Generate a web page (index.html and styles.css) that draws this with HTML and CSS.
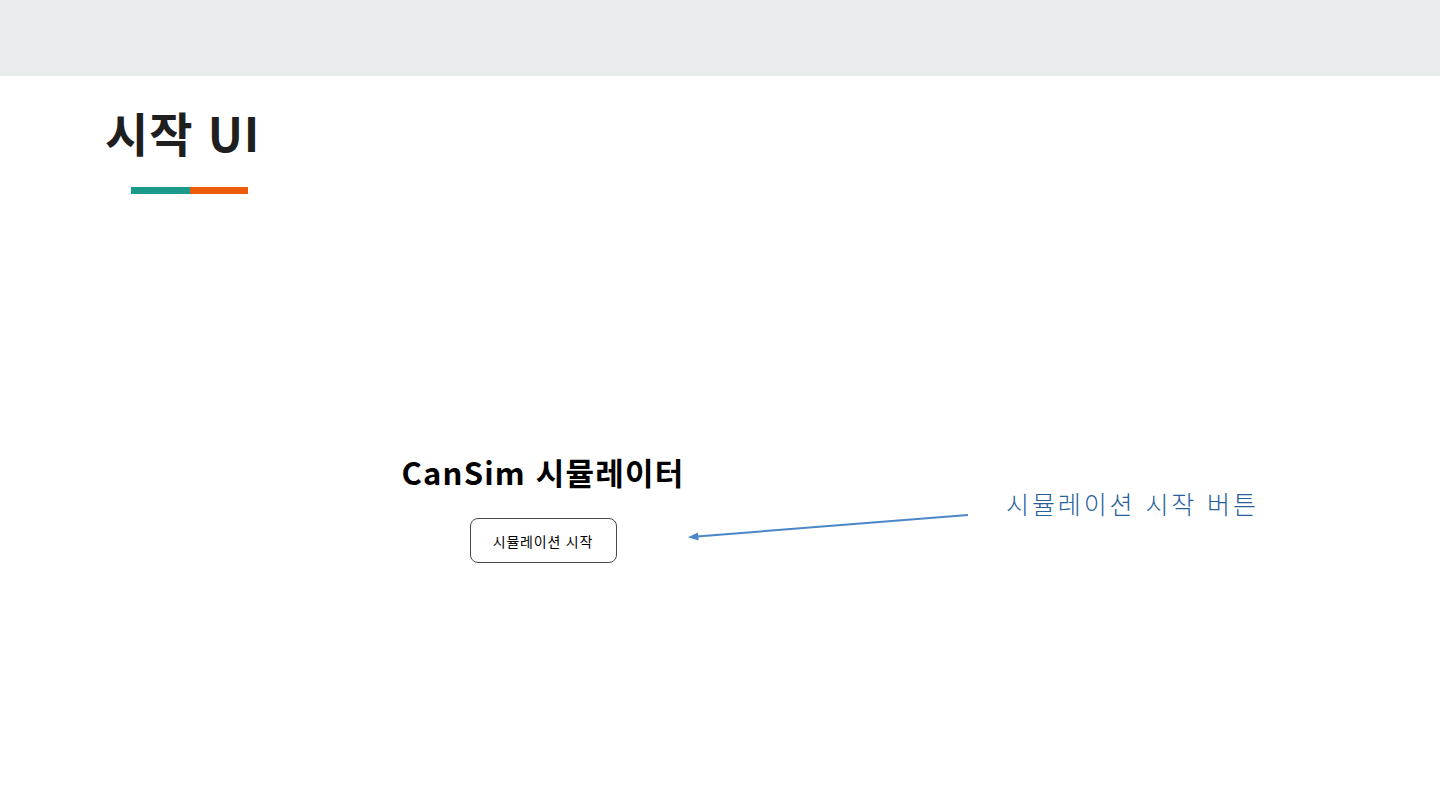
FILE: index.html
```html
<!DOCTYPE html>
<html lang="ko">
<head>
<meta charset="utf-8">
<link rel="stylesheet" href="styles.css">
</head>
<body>
<div class="topbar"></div>
<main class="slide">
  <header class="slide-head">
    <h1 class="slide-title">시작 UI</h1>
    <div class="accent"><span class="accent-teal"></span><span class="accent-orange"></span></div>
  </header>
  <section class="demo">
    <h2 class="demo-title">CanSim 시뮬레이터</h2>
    <button class="demo-btn">시뮬레이션 시작</button>
  </section>
  <svg class="arrow" width="1440" height="810" viewBox="0 0 1440 810">
    <line x1="968" y1="515" x2="697" y2="536.5" stroke="#4a86c8" stroke-width="2"/>
    <polygon points="688,537.3 698,532.5 698.6,540.5" fill="#4a86c8"/>
  </svg>
  <p class="callout">시뮬레이션 시작 버튼</p>
</main>
</body>
</html>
```
FILE: styles.css
```css
* { box-sizing: border-box; }
html, body { margin: 0; padding: 0; }
body {
  width: 1440px;
  height: 810px;
  overflow: hidden;
  background: #ffffff;
  font-family: "Noto Sans CJK KR", "Noto Sans", sans-serif;
  position: relative;
}
.topbar {
  height: 76px;
  background: #e8eced;
}
.slide { position: relative; height: 734px; }
.slide-head {
  padding: 24px 0 0 105px;
}
.slide-title {
  margin: 0;
  font-size: 47px;
  font-weight: 700;
  color: #1f1f1f;
  line-height: 64px;
  letter-spacing: 1px;
}
.accent {
  display: flex;
  margin: 23px 0 0 26px;
  height: 7px;
}
.accent-teal { width: 59px; background: #199a8a; }
.accent-orange { width: 58px; background: #ed5a08; }
.demo {
  display: flex;
  flex-direction: column;
  align-items: center;
  width: 300px;
  margin: 256px 0 0 393px;
}
.demo-title {
  margin: 0;
  font-size: 31px;
  font-weight: 700;
  color: #000;
  line-height: 44px;
  white-space: nowrap;
  letter-spacing: 1.2px;
}
.demo-btn {
  margin-top: 24px;
  width: 147px;
  height: 45px;
  border: 1px solid #4a4a4a;
  border-radius: 8px;
  background: #fff;
  font-family: "Noto Sans CJK KR", sans-serif;
  font-size: 14px;
  font-weight: 400;
  letter-spacing: 0.8px;
  color: #000;
  padding: 0;
}
.arrow {
  position: absolute;
  left: 0;
  top: -76px;
  pointer-events: none;
}
.callout {
  position: absolute;
  left: 1006px;
  top: 409px;
  margin: 0;
  font-size: 25px;
  font-weight: 300;
  color: #275f9d;
  letter-spacing: 2.9px;
  white-space: nowrap;
}
```
